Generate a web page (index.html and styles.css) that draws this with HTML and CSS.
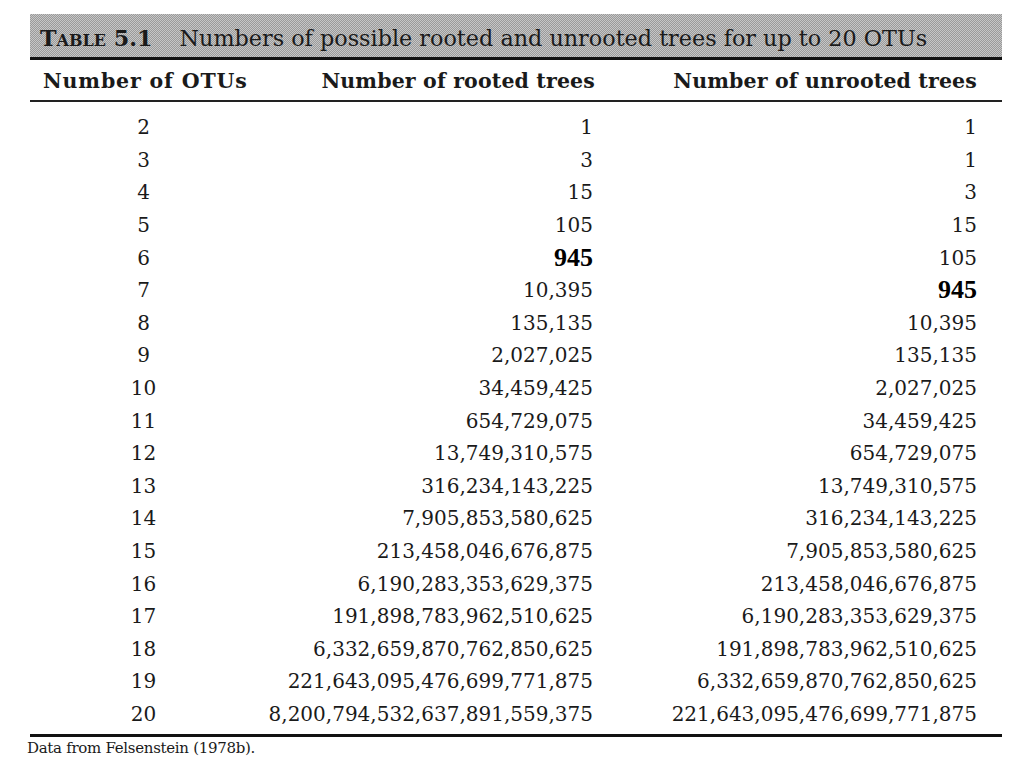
FILE: index.html
```html
<!DOCTYPE html>
<html>
<head>
<meta charset="utf-8">
<link rel="stylesheet" href="styles.css">
</head>
<body>
<div class="page">
  <div class="table">
    <div class="title"><span class="label">Table 5.1</span><span class="caption">Numbers of possible rooted and unrooted trees for up to 20 OTUs</span></div>
    <div class="row head">
      <div class="c1">Number of OTUs</div>
      <div class="c2">Number of rooted trees</div>
      <div class="c3">Number of unrooted trees</div>
    </div>
    <div class="body">
      <div class="row"><div class="c1">2</div><div class="c2">1</div><div class="c3">1</div></div>
      <div class="row"><div class="c1">3</div><div class="c2">3</div><div class="c3">1</div></div>
      <div class="row"><div class="c1">4</div><div class="c2">15</div><div class="c3">3</div></div>
      <div class="row"><div class="c1">5</div><div class="c2">105</div><div class="c3">15</div></div>
      <div class="row"><div class="c1">6</div><div class="c2"><b class="hl">945</b></div><div class="c3">105</div></div>
      <div class="row"><div class="c1">7</div><div class="c2">10,395</div><div class="c3"><b class="hl">945</b></div></div>
      <div class="row"><div class="c1">8</div><div class="c2">135,135</div><div class="c3">10,395</div></div>
      <div class="row"><div class="c1">9</div><div class="c2">2,027,025</div><div class="c3">135,135</div></div>
      <div class="row"><div class="c1">10</div><div class="c2">34,459,425</div><div class="c3">2,027,025</div></div>
      <div class="row"><div class="c1">11</div><div class="c2">654,729,075</div><div class="c3">34,459,425</div></div>
      <div class="row"><div class="c1">12</div><div class="c2">13,749,310,575</div><div class="c3">654,729,075</div></div>
      <div class="row"><div class="c1">13</div><div class="c2">316,234,143,225</div><div class="c3">13,749,310,575</div></div>
      <div class="row"><div class="c1">14</div><div class="c2">7,905,853,580,625</div><div class="c3">316,234,143,225</div></div>
      <div class="row"><div class="c1">15</div><div class="c2">213,458,046,676,875</div><div class="c3">7,905,853,580,625</div></div>
      <div class="row"><div class="c1">16</div><div class="c2">6,190,283,353,629,375</div><div class="c3">213,458,046,676,875</div></div>
      <div class="row"><div class="c1">17</div><div class="c2">191,898,783,962,510,625</div><div class="c3">6,190,283,353,629,375</div></div>
      <div class="row"><div class="c1">18</div><div class="c2">6,332,659,870,762,850,625</div><div class="c3">191,898,783,962,510,625</div></div>
      <div class="row"><div class="c1">19</div><div class="c2">221,643,095,476,699,771,875</div><div class="c3">6,332,659,870,762,850,625</div></div>
      <div class="row"><div class="c1">20</div><div class="c2">8,200,794,532,637,891,559,375</div><div class="c3">221,643,095,476,699,771,875</div></div>
    </div>
  </div>
  <p class="note">Data from Felsenstein (1978b).</p>
</div>
</body>
</html>
```

FILE: styles.css
```css
html, body {
  margin: 0;
  padding: 0;
  background: #fff;
}
body {
  font-family: "DejaVu Serif", "Liberation Serif", serif;
  color: #1a1a1a;
}
.page {
  padding: 14px 22px 0 30px;
  width: 972px;
}
.table {
  width: 972px;
}
.title {
  height: 46px;
  box-sizing: border-box;
  display: flex;
  align-items: center;
  padding: 5px 0 0 10px;
  background: repeating-conic-gradient(#9a9a9a 0 25%, #c6c6c6 0 50%) 0 0 / 2px 2px;
  border-bottom: 3px solid #111;
  font-size: 22.3px;
  white-space: nowrap;
}
.label {
  font-weight: bold;
  font-variant: small-caps;
  margin-right: 27px;
}
.row {
  display: grid;
  grid-template-columns: 227px 336px 384px;
  padding-right: 25px;
  height: 32.6px;
  align-items: center;
  font-size: 20px;
  white-space: nowrap;
}
.row.head {
  height: 38px;
  font-weight: bold;
  font-size: 20.5px;
  letter-spacing: 0.15px;
  border-bottom: 2px solid #222;
  padding-top: 2px;
}
.head .c1 { text-align: left; padding-left: 13px; letter-spacing: 0.85px; }
.head .c2 { margin-right: -2px; }
.c1 { text-align: center; }
.c2, .c3 { text-align: right; }
.body {
  padding-top: 9px;
  padding-bottom: 4px;
  border-bottom: 3px solid #111;
}
.hl {
  font-family: "Liberation Serif", serif;
  font-weight: bold;
  font-size: 26px;
  color: #000;
}
.note {
  margin: 2px 0 0 -3px;
  font-size: 15px;
  letter-spacing: -0.3px;
}
```
